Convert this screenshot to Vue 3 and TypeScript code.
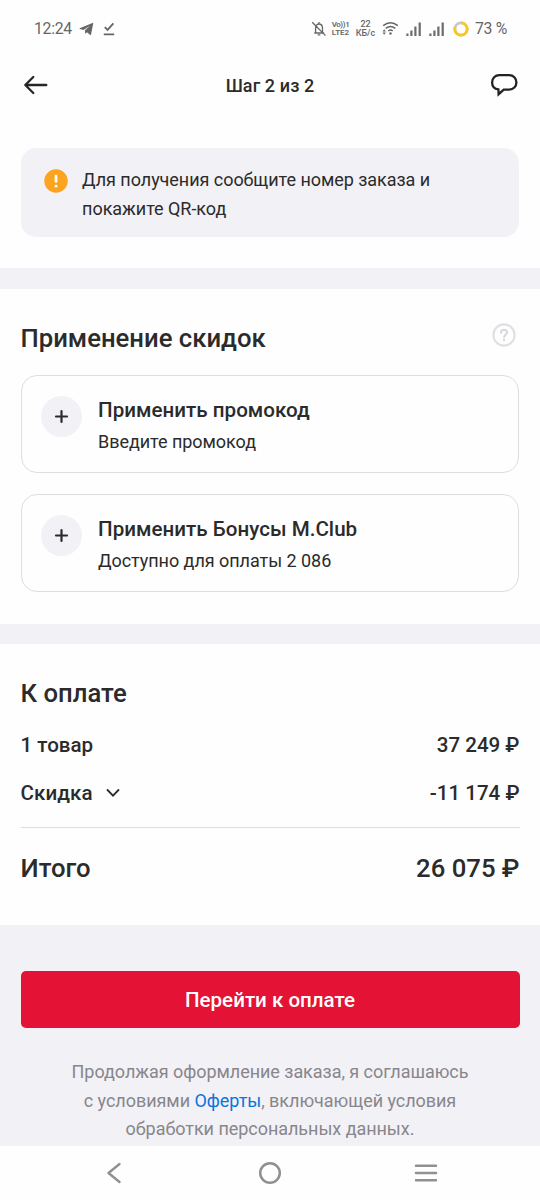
<script setup lang="ts">
interface DiscountOption {
  title: string
  subtitle: string
}

const discounts: DiscountOption[] = [
  { title: 'Применить промокод', subtitle: 'Введите промокод' },
  { title: 'Применить Бонусы M.Club', subtitle: 'Доступно для оплаты 2 086' },
]
</script>

<template>
  <div class="screen">
    <div class="status">
      <span class="clock">12:24</span>
      <svg class="telegram" width="16" height="14" viewBox="0 0 16 14">
        <path d="M.7 6.200 13.500.9q.9-.3.7.7l-2.100 10.700q-.3 1-1.200.4L8 10.300 6.500 12 5.800 8.500 11 3.700 4.500 7.900 1 6.900q-.8-.3-.3-.7Z" fill="#666" />
      </svg>
      <svg class="done" width="12" height="14" viewBox="0 0 12 14">
        <path d="m1.800 5.100 2.800 2.800L10.400 1.300M.8 12.300h10.400" fill="none" stroke="#666" stroke-width="1.800" />
      </svg>
      <svg class="bell" width="16" height="16" viewBox="0 0 16 16">
        <path d="M3.300 12h9.900M4.600 11.500V7.200C4.600 4.500 6 3 8 3s3.500 1.500 3.500 4.200v4.300M8 1v2M6.700 13.900h2.600M1.200 1.200l13.300 13.400" fill="none" stroke="#666" stroke-width="1.300" />
      </svg>
      <div class="mini volte"><span class="vo">Vo))1</span><span>LTE2</span></div>
      <div class="mini speed"><span>22</span><span>КБ/с</span></div>
      <svg class="wifi" width="17" height="15" viewBox="0 0 17 15">
        <path d="M1.200 4.700Q8.500-1.200 15.800 4.700M3.700 7.400q4.800-3.800 9.600 0M6.300 10q2.200-1.800 4.400 0" fill="none" stroke="#666" stroke-width="1.500" />
        <circle cx="8.500" cy="12.500" r="1.200" fill="#666" />
        <path d="M2.200 8.300 3.900 10.500H.5ZM2.200 13.800.5 11.500h3.400Z" fill="#666" />
      </svg>
      <svg v-for="n in 2" :key="n" class="signal" width="16" height="14" viewBox="0 0 16 14">
        <path d="M1.400 11.600V14M5.400 8.500V14M9.400 4.600V14M13.700.6V14" stroke="#6c6c6c" stroke-width="2.200" />
      </svg>
      <svg class="battery" width="16" height="16" viewBox="0 0 16 16">
        <circle cx="8" cy="8" r="6.200" fill="none" stroke="#c9c9c9" stroke-width="2.800" />
        <circle cx="8" cy="8" r="6.200" fill="none" stroke="#f8c91c" stroke-width="2.800" stroke-dasharray="30.500 38.960" transform="rotate(-90 8 8)" />
      </svg>
      <span class="percent">73 %</span>
    </div>

    <header class="header">
      <svg width="26" height="22" viewBox="0 0 26 22">
        <path d="M10.300 3 2.300 11l8 8M2.300 11h21" fill="none" stroke="#262626" stroke-width="2.300" stroke-linecap="round" stroke-linejoin="round" />
      </svg>
      <h1>Шаг 2 из 2</h1>
      <svg width="28" height="24" viewBox="0 0 28 24">
        <path d="M9.300 2.200h9.900c4.200 0 7.200 3.200 7.200 7.200s-3 7.200-7.200 7.200h-5.400L8.600 21.200 8.400 16.400C4.400 15.700 2.100 12.900 2.100 9.400c0-4 3-7.200 7.200-7.200Z" fill="none" stroke="#222" stroke-width="2.300" stroke-linejoin="miter" />
      </svg>
    </header>

    <div class="notice">
      <svg width="24" height="24" viewBox="0 0 24 24">
        <circle cx="12" cy="12" r="11.700" fill="#fca31f" />
        <path d="M12 7v5.400" stroke="#fff" stroke-width="2.700" stroke-linecap="round" />
        <circle cx="12" cy="17.200" r="1.400" fill="#fff" />
      </svg>
      <p>Для получения сообщите номер заказа и<br />покажите QR-код</p>
    </div>

    <section class="discounts">
      <div class="heading">
        <h2>Применение скидок</h2>
        <svg width="24" height="24" viewBox="0 0 24 24">
          <circle cx="12" cy="12" r="10.600" fill="none" stroke="#dfdfe4" stroke-width="2.100" />
          <path d="M9 9.700c0-1.800 1.200-2.900 3-2.900s3 1.100 3 2.700c0 2.100-2.800 2.300-2.900 4.500" fill="none" stroke="#d8d8de" stroke-width="2.100" stroke-linecap="round" />
          <circle cx="12" cy="17" r="1.200" fill="#d8d8de" />
        </svg>
      </div>
      <div v-for="item in discounts" :key="item.title" class="option">
        <span class="plus">
          <svg width="15" height="15" viewBox="0 0 15 15">
            <path d="M7.500 2v11M2 7.500h11" stroke="#2b2b2b" stroke-width="2.200" stroke-linecap="round" />
          </svg>
        </span>
        <div>
          <h3>{{ item.title }}</h3>
          <p>{{ item.subtitle }}</p>
        </div>
      </div>
    </section>

    <section class="summary">
      <h2>К оплате</h2>
      <div class="row"><span>1 товар</span><span>37 249 ₽</span></div>
      <div class="row">
        <span class="sale">Скидка
          <svg width="14" height="10" viewBox="0 0 14 10"><path d="m1.500 2 5.500 5.600L12.500 2" fill="none" stroke="#2b2b2b" stroke-width="1.800" stroke-linecap="round" /></svg>
        </span>
        <span>-11 174 ₽</span>
      </div>
      <div class="row total"><span>Итого</span><span>26 075 ₽</span></div>
    </section>

    <footer class="checkout">
      <button type="button">Перейти к оплате</button>
      <p>Продолжая оформление заказа, я соглашаюсь<br />с условиями <a>Оферты</a>, включающей условия<br />обработки персональных данных.</p>
    </footer>

    <nav class="nav">
      <svg width="16" height="22" viewBox="0 0 16 22"><path d="M13.500 2 2.500 11l11 9" fill="none" stroke="#909090" stroke-width="2.400" stroke-linecap="round" stroke-linejoin="round" /></svg>
      <svg width="24" height="24" viewBox="0 0 24 24"><circle cx="12" cy="12" r="9.800" fill="none" stroke="#909090" stroke-width="2.500" /></svg>
      <svg width="24" height="20" viewBox="0 0 24 20"><path d="M2 2.700h20M2 10h20M2 17.300h20" stroke="#909090" stroke-width="2.500" stroke-linecap="round" /></svg>
    </nav>
  </div>
</template>

<style>
body { margin: 0; background: #fff; }
</style>

<style scoped>
* { box-sizing: border-box; }
h1, h2, h3, p { margin: 0; font-weight: 500; }
svg { display: block; flex: none; }
.screen {
  width: 540px;
  height: 1200px;
  overflow: hidden;
  display: flex;
  flex-direction: column;
  background: #fefefe;
  color: #2b2b2b;
  font-family: Roboto, "Noto Sans", sans-serif;
  white-space: nowrap;
}
.status {
  height: 57px;
  flex: none;
  display: flex;
  align-items: center;
  padding: 0 33px 0 34px;
  color: #666;
  font-size: 15.800px;
  letter-spacing: -0.300px;
}
.clock { width: 38px; }
.telegram { margin-left: 7px; }
.done { margin-left: 8px; }
.bell { margin-left: auto; }
.mini {
  display: flex;
  flex-direction: column;
  align-items: center;
  font-size: 9px;
  line-height: 9px;
  letter-spacing: 0;
}
.volte { margin-left: 4.500px; width: 18px; font-size: 8px; line-height: 8px; font-weight: 600; }
.vo { letter-spacing: -0.400px; }
.speed { margin-left: 6px; width: 20px; font-weight: 500; }
.wifi { margin-left: 6px; }
.signal { margin-left: 7px; }
.battery { margin-left: 8.500px; }
.percent { margin-left: 6px; width: 32px; }
.header {
  height: 56px;
  flex: none;
  display: flex;
  align-items: center;
  justify-content: space-between;
  padding: 0 22px 0 23px;
}
.header h1 { font-size: 18px; letter-spacing: 0.100px; margin-left: 1px; }
.notice {
  height: 89px;
  flex: none;
  margin: 35.400px 21px 30.600px 20.500px;
  padding: 17.600px 24px 0;
  display: flex;
  gap: 14px;
  border-radius: 15px;
  background: #f2f1f6;
}
.notice svg { margin-top: 3.500px; margin-left: -0.400px; }
.notice p { font-size: 18px; line-height: 28.800px; font-weight: 400; letter-spacing: -0.045px; }
.discounts {
  height: 376px;
  flex: none;
  border: solid #f2f1f6;
  border-width: 21px 0 20px;
  padding: 32px 21px 0 20.500px;
}
.heading {
  height: 54px;
  display: flex;
  justify-content: space-between;
  padding-right: 3px;
}
.heading svg { margin-top: 2px; }
h2 { font-size: 25.700px; line-height: 34px; }
.option {
  height: 98.500px;
  margin-bottom: 20.500px;
  padding: 20px 19px;
  display: flex;
  gap: 16.500px;
  border: 1.300px solid #dedee0;
  border-radius: 16px;
}
.plus {
  width: 41px;
  height: 41px;
  display: flex;
  align-items: center;
  justify-content: center;
  border-radius: 50%;
  background: #f2f1f6;
}
.option h3 { font-size: 20.570px; line-height: 29px; letter-spacing: 0.030px; }
.option p { font-size: 18px; line-height: 33px; font-weight: 400; letter-spacing: -0.045px; }
.summary {
  height: 281px;
  flex: none;
  padding: 32px 20.500px 0;
}
.row {
  height: 48px;
  display: flex;
  align-items: center;
  justify-content: space-between;
  font-size: 20.570px;
  font-weight: 500;
}
.summary h2 { margin-bottom: 11.400px; }
.sale { display: flex; align-items: center; gap: 13.500px; letter-spacing: 0.080px; }
.total {
  height: 81px;
  margin-top: 9.600px;
  border-top: 1px solid #dedee0;
  font-size: 25.700px;
}
.checkout {
  height: 221px;
  flex: none;
  padding: 46px 20.500px 0;
  background: #f2f1f6;
  text-align: center;
}
.checkout button {
  display: block;
  width: 499px;
  height: 57px;
  padding: 1px 0 0;
  border: 0;
  border-radius: 5px;
  background: #e41234;
  color: #fff;
  font: 500 20.570px Roboto, "Noto Sans", sans-serif;
}
.checkout p {
  margin-top: 29.900px;
  color: #87868b;
  font-size: 18px;
  line-height: 28.800px;
  font-weight: 400;
  letter-spacing: -0.045px;
}
.checkout a { color: #0a75dc; }
.nav {
  height: 54px;
  flex: none;
  display: grid;
  grid-template-columns: 150px 1fr 150px;
  align-items: center;
  justify-items: center;
  padding: 0 39.500px 0 38.500px;
}
.nav svg:nth-child(2) { margin-left: 1px; }
</style>
